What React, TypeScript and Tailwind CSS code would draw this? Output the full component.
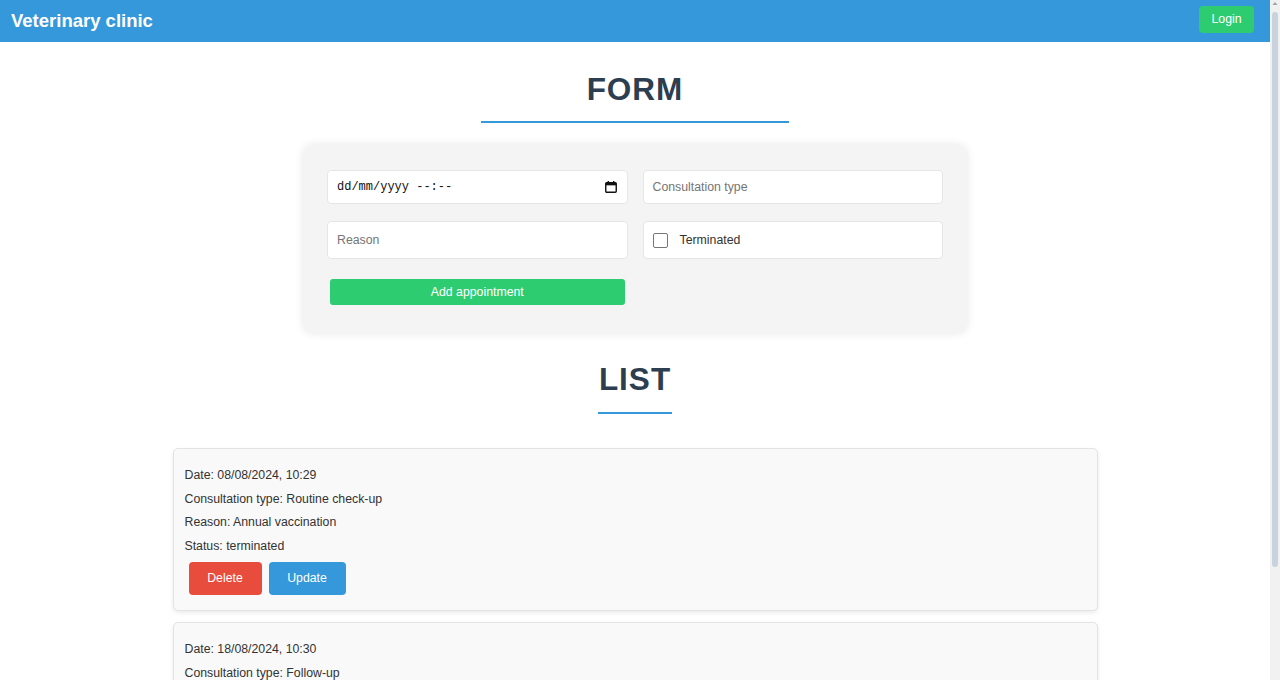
import React from 'react'

const appointments = [
    { date: '08/08/2024, 10:29', type: 'Routine check-up', reason: 'Annual vaccination', status: 'terminated' },
    { date: '18/08/2024, 10:30', type: 'Follow-up', reason: 'Skin allergy control', status: 'pending' },
    { date: '25/08/2024, 09:15', type: 'Emergency', reason: 'Leg injury', status: 'pending' },
]

function CalendarIcon() {
    return (
        <svg width="12" height="12" viewBox="0 0 12 12" fill="none">
            <rect x="0.75" y="1.75" width="10.5" height="9.5" rx="1" stroke="#111" strokeWidth="1.4" />
            <rect x="0.75" y="1.75" width="10.5" height="2.6" fill="#111" />
            <rect x="2.6" y="0" width="1.4" height="2.2" fill="#111" />
            <rect x="8" y="0" width="1.4" height="2.2" fill="#111" />
        </svg>
    )
}

// fake browser scrollbar, the screenshot has one on the right
function Scrollbar() {
    return (
        <div className="w-[10px] shrink-0 bg-[#f1f1f1] flex flex-col items-center">
            <svg width="6" height="5" viewBox="0 0 6 5" className="mt-[1px]">
                <path d="M3 1 L5.5 4 L0.5 4 Z" fill="#a3a3a3" />
            </svg>
            <div className="mt-[6px] h-[555px] w-[6px] rounded-[3px] bg-[#c9d3dd]" />
        </div>
    )
}

export default function App() {
    return (
        <div className="h-screen flex overflow-hidden bg-white font-['Liberation_Sans',Arial,sans-serif] text-[#333]">
            <div className="w-[1270px] shrink-0">
                <nav className="h-[42px] bg-[#3498db] flex items-center justify-between pl-[11px] pr-[16px]">
                    <span className="text-white text-[18.5px] font-bold">Veterinary clinic</span>
                    <button className="mb-[3px] h-[27px] w-[55px] rounded-[4px] bg-[#2ecc71] text-white text-[12.3px]">
                        Login
                    </button>
                </nav>

                <main className="pb-10">
                    <h2 className="mt-[28px] text-center text-[31.5px] leading-[38px] font-bold tracking-[1px] text-[#2c3e50]">
                        FORM
                    </h2>
                    <div className="mx-auto mt-[13px] h-[2px] w-[308px] bg-[#3498db]" />

                    <section className="mx-auto mt-[22px] w-[664px] rounded-[10px] bg-[#f4f4f4] px-[24px] pt-[25px] pb-[28px] shadow-[0_0_10px_rgba(0,0,0,0.1)]">
                        <div className="grid grid-cols-2 gap-x-[15px] gap-y-[17px]">
                            <div className="h-[34px] flex items-center justify-between rounded-[4px] border border-[#e6e6e6] bg-white pl-[9px] pr-[10px]">
                                <span className="font-['Liberation_Mono',monospace] text-[12px] text-[#111] whitespace-pre">
                                    dd/mm/yyyy --:--
                                </span>
                                <CalendarIcon />
                            </div>
                            <div className="h-[34px] flex items-center rounded-[4px] border border-[#e6e6e6] bg-white pl-[9px]">
                                <span className="text-[12.3px] text-[#757575]">Consultation type</span>
                            </div>
                            <div className="h-[38px] flex items-center rounded-[4px] border border-[#e6e6e6] bg-white pl-[9px]">
                                <span className="text-[12.3px] text-[#757575]">Reason</span>
                            </div>
                            <div className="h-[38px] flex items-center rounded-[4px] border border-[#e6e6e6] bg-white pl-[9px]">
                                <span className="h-[15px] w-[15px] rounded-[2px] border-[1.5px] border-[#767676] bg-white" />
                                <span className="ml-[12px] text-[12.3px] text-[#333]">Terminated</span>
                            </div>
                        </div>
                        <div className="grid grid-cols-2 gap-x-[15px] mt-[20px]">
                            <button className="mx-[3px] h-[26px] rounded-[3px] bg-[#2ecc71] text-white text-[12.3px]">
                                Add appointment
                            </button>
                        </div>
                    </section>

                    <h2 className="mt-[27px] text-center text-[31.5px] leading-[38px] font-bold tracking-[1px] text-[#2c3e50]">
                        LIST
                    </h2>
                    <div className="mx-auto mt-[14px] h-[2px] w-[74px] bg-[#3498db]" />

                    <div className="mx-auto mt-[34px] w-[925px] flex flex-col gap-[11px]">
                        {appointments.map((a, i) => (
                            <div
                                key={i}
                                className="rounded-[5px] border border-[#e3e3e3] bg-[#f9f9f9] px-[11px] pt-[15px] pb-[15px] shadow-[0_2px_4px_rgba(0,0,0,0.08)]"
                            >
                                <p className="text-[12.3px] leading-[23.7px]">Date: {a.date}</p>
                                <p className="text-[12.3px] leading-[23.7px]">Consultation type: {a.type}</p>
                                <p className="text-[12.3px] leading-[23.7px]">Reason: {a.reason}</p>
                                <p className="text-[12.3px] leading-[23.7px]">Status: {a.status}</p>
                                <div className="mt-[3px] ml-[4px] flex gap-[7px]">
                                    <button className="h-[33px] w-[73px] rounded-[4px] bg-[#e74c3c] text-white text-[12.3px]">
                                        Delete
                                    </button>
                                    <button className="h-[33px] w-[77px] rounded-[4px] bg-[#3498db] text-white text-[12.3px]">
                                        Update
                                    </button>
                                </div>
                            </div>
                        ))}
                    </div>
                </main>
            </div>
            <Scrollbar />
        </div>
    )
}
